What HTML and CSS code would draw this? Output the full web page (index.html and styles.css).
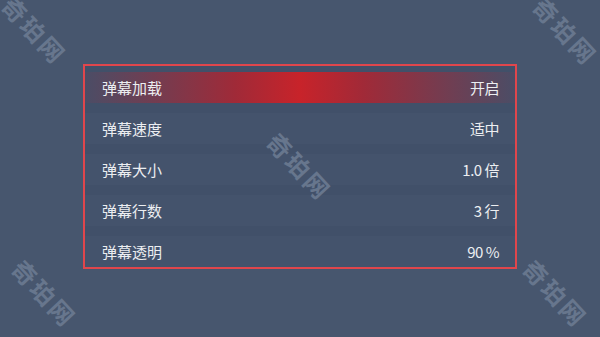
FILE: index.html
```html
<!DOCTYPE html>
<html lang="zh-CN">
<head>
    <meta charset="UTF-8">
    <meta name="viewport" content="width=device-width, initial-scale=1.0">
    <title>弹幕设置</title>
    <link rel="stylesheet" href="styles.css">
</head>
<body>
    <div class="screen">
        <div class="settings-box">
            <div class="setting-row active">
                <span class="label">弹幕加载</span>
                <span class="value">开启</span>
            </div>
            <div class="setting-row">
                <span class="label">弹幕速度</span>
                <span class="value">适中</span>
            </div>
            <div class="setting-row">
                <span class="label">弹幕大小</span>
                <span class="value">1.0 倍</span>
            </div>
            <div class="setting-row">
                <span class="label">弹幕行数</span>
                <span class="value">3 行</span>
            </div>
            <div class="setting-row">
                <span class="label">弹幕透明</span>
                <span class="value">90 %</span>
            </div>
        </div>

        <!-- 水印 -->
        <span class="watermark wm-tl">奇珀网</span>
        <span class="watermark wm-tr">奇珀网</span>
        <span class="watermark wm-c">奇珀网</span>
        <span class="watermark wm-bl">奇珀网</span>
        <span class="watermark wm-br">奇珀网</span>
    </div>
</body>
</html>
```

FILE: styles.css
```css
html, body {
    margin: 0;
    padding: 0;
}
body {
    font-family: "Noto Sans CJK SC", "Noto Sans", sans-serif;
    background: #47566e;
}
.screen {
    position: relative;
    width: 600px;
    height: 337px;
    overflow: hidden;
    padding-top: 64px;
    box-sizing: border-box;
}
.settings-box {
    width: 430px;
    margin-left: 83px;
    border: 2px solid #e0464c;
    padding-top: 6px;
    display: flex;
    flex-direction: column;
    gap: 10px;
    background: #415069;
}
.setting-row {
    height: 31px;
    display: flex;
    align-items: center;
    justify-content: space-between;
    padding: 0 16px 0 17px;
    background: #44536c;
    color: #eceef1;
    font-size: 15px;
}
.setting-row.active {
    background: linear-gradient(to right, #4b4d66 0%, #a02a38 35%, #c8232a 50%, #a02a38 65%, #4b4d66 100%);
}
.value {
    letter-spacing: -0.5px;
}
.watermark {
    position: absolute;
    color: #67768d;
    font-size: 24px;
    font-weight: bold;
    letter-spacing: 3px;
    transform: translate(-50%, -50%) rotate(47deg);
    white-space: nowrap;
}
.wm-tl { left: 35px; top: 30px; }
.wm-tr { left: 566px; top: 31px; }
.wm-c { left: 300px; top: 166px; }
.wm-bl { left: 45px; top: 293px; }
.wm-br { left: 556px; top: 293px; }
```
